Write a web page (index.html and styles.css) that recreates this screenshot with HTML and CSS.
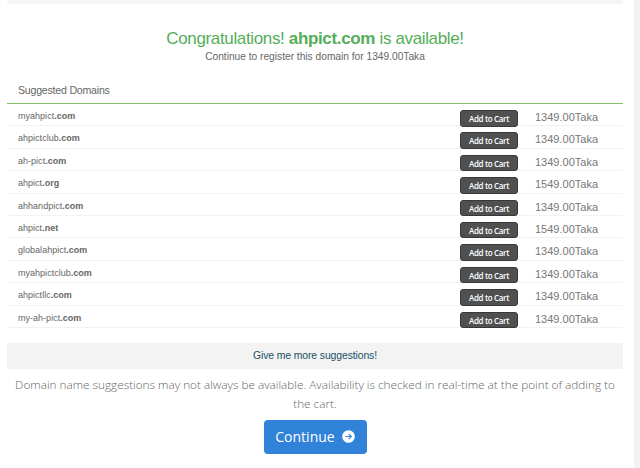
FILE: index.html
```html
<!DOCTYPE html>
<html lang="en">
<head>
    <meta charset="UTF-8" />
    <meta name="viewport" content="width=device-width, initial-scale=1.0"/>
    <title>Register Domain</title>
    <link rel="stylesheet" href="styles.css">
</head>
<body>
    <div class="page">
        <div class="search-bar"></div>

        <div class="result">
            <h1>Congratulations! <strong>ahpict.com</strong> is available!</h1>
            <p>Continue to register this domain for 1349.00Taka</p>
        </div>

        <div class="suggestions">
            <div class="suggestions-title">Suggested Domains</div>
            <div class="row"><div class="domain">myahpict<b>.com</b></div><button class="cart">Add to Cart</button><div class="price">1349.00Taka</div></div>
            <div class="row"><div class="domain">ahpictclub<b>.com</b></div><button class="cart">Add to Cart</button><div class="price">1349.00Taka</div></div>
            <div class="row"><div class="domain">ah-pict<b>.com</b></div><button class="cart">Add to Cart</button><div class="price">1349.00Taka</div></div>
            <div class="row"><div class="domain">ahpict<b>.org</b></div><button class="cart">Add to Cart</button><div class="price">1549.00Taka</div></div>
            <div class="row"><div class="domain">ahhandpict<b>.com</b></div><button class="cart">Add to Cart</button><div class="price">1349.00Taka</div></div>
            <div class="row"><div class="domain">ahpict<b>.net</b></div><button class="cart">Add to Cart</button><div class="price">1549.00Taka</div></div>
            <div class="row"><div class="domain">globalahpict<b>.com</b></div><button class="cart">Add to Cart</button><div class="price">1349.00Taka</div></div>
            <div class="row"><div class="domain">myahpictclub<b>.com</b></div><button class="cart">Add to Cart</button><div class="price">1349.00Taka</div></div>
            <div class="row"><div class="domain">ahpictllc<b>.com</b></div><button class="cart">Add to Cart</button><div class="price">1349.00Taka</div></div>
            <div class="row"><div class="domain">my-ah-pict<b>.com</b></div><button class="cart">Add to Cart</button><div class="price">1349.00Taka</div></div>
        </div>

        <a class="more">Give me more suggestions!</a>

        <p class="note">Domain name suggestions may not always be available. Availability is checked in real-time at the point of adding to the cart.</p>

        <button class="continue">
            <span>Continue</span>
            <svg width="13" height="13" viewBox="0 0 13 13">
                <circle cx="6.5" cy="6.5" r="6.3" fill="#fff"/>
                <path d="M3.4 6.5h5.8M6.7 3.8l2.7 2.7-2.7 2.7" fill="none" stroke="#3182d9" stroke-width="1.1"/>
            </svg>
        </button>
    </div>
</body>
</html>
```
FILE: styles.css
```css
* {
    box-sizing: border-box;
}

body {
    margin: 0;
    height: 468px;
    overflow: hidden;
    background: #fff;
    border-right: 6px solid #f2f2f2;
    font-family: "Liberation Sans", Arial, sans-serif;
    color: #666;
}

.page {
    width: 616px;
    margin-left: 7px;
    display: flex;
    flex-direction: column;
}

.search-bar {
    height: 4px;
    background: #f5f5f5;
    border-radius: 0 0 3px 3px;
}

/* Availability message */
.result {
    height: 73px;
    padding-top: 25px;
    text-align: center;
}

.result h1 {
    margin: 0;
    font-size: 17px;
    line-height: 20px;
    font-weight: 400;
    letter-spacing: -0.35px;
    color: #54ad58;
}

.result p {
    margin: 0;
    font-size: 10.2px;
    line-height: 15px;
}

/* Suggested domains list */
.suggestions-title {
    height: 27px;
    padding-left: 11px;
    font-size: 10.6px;
    line-height: 27px;
    letter-spacing: -0.22px;
    border-bottom: 1px solid #86bd62;
}

.row {
    display: grid;
    grid-template-columns: 453px 58px 1fr;
    align-items: start;
    height: 22.4px;
    border-bottom: 1px solid #f3f3f3;
}

.domain {
    padding: 5px 0 0 11px;
    font-size: 9px;
    line-height: 14px;
    letter-spacing: 0.02px;
}

.cart {
    height: 16.5px;
    margin-top: 6px;
    padding: 0;
    border: 1px solid #383838;
    border-radius: 3px;
    background: #505050;
    color: #fff;
    font: 600 8px/15px "Open Sans", sans-serif;
    letter-spacing: -0.35px;
}

.price {
    padding: 6px 0 0 17px;
    font-size: 11px;
    line-height: 14px;
    color: #777;
}

.more {
    height: 26px;
    margin-top: 15px;
    background: #f3f3f3;
    color: #1b5066;
    font-size: 10.4px;
    line-height: 26px;
    letter-spacing: -0.1px;
    text-align: center;
}

.note {
    margin: 6px 0 0;
    padding: 0 6px;
    font: 300 11.75px/19px "Open Sans", sans-serif;
    text-align: center;
    color: #666;
}

.continue {
    display: flex;
    align-items: center;
    justify-content: center;
    gap: 7px;
    align-self: center;
    width: 103px;
    height: 34px;
    margin-top: 7px;
    padding: 0;
    border: 0;
    border-radius: 4px;
    background: #3182d9;
    color: #fff;
    font: 400 14px/20px "Open Sans", sans-serif;
}
```
